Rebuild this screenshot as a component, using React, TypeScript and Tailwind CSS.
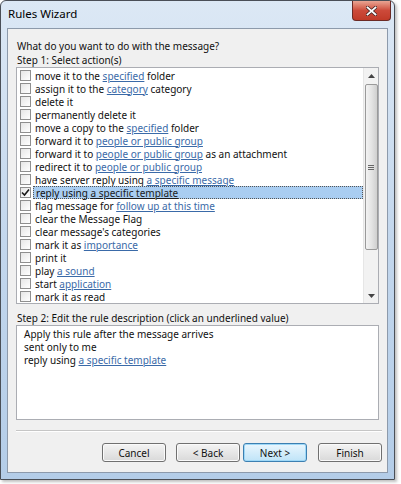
import React from 'react';

type Seg = { t: string; link?: boolean };

const actions: Seg[][] = [
  [{ t: 'move it to the ' }, { t: 'specified', link: true }, { t: ' folder' }],
  [{ t: 'assign it to the ' }, { t: 'category', link: true }, { t: ' category' }],
  [{ t: 'delete it' }],
  [{ t: 'permanently delete it' }],
  [{ t: 'move a copy to the ' }, { t: 'specified', link: true }, { t: ' folder' }],
  [{ t: 'forward it to ' }, { t: 'people or public group', link: true }],
  [{ t: 'forward it to ' }, { t: 'people or public group', link: true }, { t: ' as an attachment' }],
  [{ t: 'redirect it to ' }, { t: 'people or public group', link: true }],
  [{ t: 'have server reply using ' }, { t: 'a specific message', link: true }],
  [{ t: 'reply using ' }, { t: 'a specific template', link: true }],
  [{ t: 'flag message for ' }, { t: 'follow up at this time', link: true }],
  [{ t: 'clear the Message Flag' }],
  [{ t: "clear message's categories" }],
  [{ t: 'mark it as ' }, { t: 'importance', link: true }],
  [{ t: 'print it' }],
  [{ t: 'play ' }, { t: 'a sound', link: true }],
  [{ t: 'start ' }, { t: 'application', link: true }],
  [{ t: 'mark it as read' }],
];

const SELECTED = 9;

function Checkbox({ checked }: { checked?: boolean }) {
  return (
    <div className="w-[11px] h-[11px] shrink-0 border border-[#8f8f8f] bg-gradient-to-br from-[#e6e6e6] to-white flex items-center justify-center">
      {checked && (
        <svg width="9" height="9" viewBox="0 0 9 9">
          <path d="M1 4.5 L3.5 7 L8 1.5" fill="none" stroke="#1a1a1a" strokeWidth="1.6" />
        </svg>
      )}
    </div>
  );
}

function Row({ segs, selected }: { segs: Seg[]; selected: boolean }) {
  return (
    <div className="h-[13.15px] flex items-center pl-[3px]">
      <Checkbox checked={selected} />
      <div
        className={`ml-[2px] h-full flex items-center pl-[2px] whitespace-nowrap ${
          selected ? 'flex-1 bg-[#a9cdf1] border border-dotted border-[#555]' : ''
        }`}
      >
        {segs.map((s, i) =>
          s.link ? (
            <span key={i} className={`underline ${selected ? 'text-[#1b1b1b]' : 'text-[#3a6aa8]'}`}>
              {s.t}
            </span>
          ) : (
            <span key={i} className="whitespace-pre">{s.t}</span>
          )
        )}
      </div>
    </div>
  );
}

function Button({ label, primary }: { label: string; primary?: boolean }) {
  return (
    <div
      className={`w-[64px] h-[19px] rounded-[3px] border flex items-center justify-center ${
        primary
          ? 'border-[#3c7fb1] bg-gradient-to-b from-[#eaf6fd] to-[#bfe4f8] shadow-[inset_0_0_0_1px_#9ed8f7]'
          : 'border-[#707070] bg-gradient-to-b from-[#f4f4f4] to-[#d9d9d9] shadow-[inset_0_0_0_1px_#fafafa]'
      }`}
    >
      {label}
    </div>
  );
}

export default function App() {
  return (
    <div className="w-[401px] h-[484px] bg-white font-['Noto_Sans',sans-serif] text-[10px] text-[#111] leading-none">
      <div className="w-[395px] h-[480px] border border-[#4a4f57] rounded-t-[6px] bg-gradient-to-b from-[#dce8f5] via-[#c3d7ed] to-[#b4cde8] flex flex-col px-[6px] pb-[6px] shadow-[2px_2px_3px_rgba(0,0,0,0.25)]">
        <div className="h-[27px] flex items-start justify-between shrink-0">
          <div className="pt-[7px] pl-[1px] text-[11.5px] text-black">Rules Wizard</div>
          <div className="w-[39px] h-[20px] mr-[-3px] rounded-b-[4px] border border-t-0 border-[#6b2a25] bg-gradient-to-b from-[#e8a493] via-[#cc4a3a] to-[#c03a28] flex items-center justify-center">
            <svg width="11" height="10" viewBox="0 0 11 10">
              <path d="M1.5 1.5 L9.5 8.5 M9.5 1.5 L1.5 8.5" stroke="#3a2020" strokeWidth="3.2" strokeLinecap="square" />
              <path d="M1.5 1.5 L9.5 8.5 M9.5 1.5 L1.5 8.5" stroke="#ffffff" strokeWidth="1.8" strokeLinecap="square" />
            </svg>
          </div>
        </div>

        <div className="flex-1 border border-[#8d9aab] bg-[#f0f0f0] flex flex-col px-[8px]">
          <div className="mt-[9px] h-[15px] pl-[1px] flex items-center">What do you want to do with the message?</div>
          <div className="h-[14px] pl-[1px] flex items-center">Step 1: Select action(s)</div>

          <div className="h-[237px] border border-[#abadb3] bg-white flex">
            <div className="flex-1 pt-[1px] flex flex-col">
              {actions.map((segs, i) => (
                <Row key={i} segs={segs} selected={i === SELECTED} />
              ))}
            </div>
            <div className="w-[15px] bg-[#f2f2f2] border-l border-[#e6e6e6] flex flex-col items-center">
              <div className="h-[15px] flex items-center justify-center">
                <svg width="7" height="4" viewBox="0 0 7 4">
                  <path d="M0 4 L3.5 0 L7 4 Z" fill="#444" />
                </svg>
              </div>
              <div className="w-[13px] h-[166px] mt-[1px] rounded-[2px] border border-[#9a9a9a] bg-gradient-to-r from-[#f3f3f3] via-[#e4e4e4] to-[#cfcfcf] flex items-center justify-center">
                <div className="flex flex-col gap-[1px]">
                  <div className="w-[6px] h-[1px] bg-[#666]" />
                  <div className="w-[6px] h-[1px] bg-[#666]" />
                  <div className="w-[6px] h-[1px] bg-[#666]" />
                </div>
              </div>
              <div className="flex-1" />
              <div className="h-[15px] flex items-center justify-center">
                <svg width="7" height="4" viewBox="0 0 7 4">
                  <path d="M0 0 L7 0 L3.5 4 Z" fill="#444" />
                </svg>
              </div>
            </div>
          </div>

          <div className="mt-[7px] h-[14px] pl-[1px] flex items-center">Step 2: Edit the rule description (click an underlined value)</div>
          <div className="h-[95px] border border-[#abadb3] bg-white pl-[7px] pt-[1px] flex flex-col">
            <div className="h-[13.3px] flex items-center">Apply this rule after the message arrives</div>
            <div className="h-[13.3px] flex items-center">sent only to me</div>
            <div className="h-[13.3px] flex items-center">
              <span className="whitespace-pre">reply using </span>
              <span className="underline text-[#3a6aa8]">a specific template</span>
            </div>
          </div>

          <div className="mt-[10px] mr-[-3px] h-[2px] border-t border-[#c6c6c6] border-b border-b-white" />

          <div className="mt-[11px] mr-[-3px] flex justify-end">
            <Button label="Cancel" />
            <div className="w-[10px]" />
            <Button label="< Back" />
            <div className="w-[3px]" />
            <Button label="Next >" primary />
            <div className="w-[11px]" />
            <Button label="Finish" />
          </div>
        </div>
      </div>
    </div>
  );
}
